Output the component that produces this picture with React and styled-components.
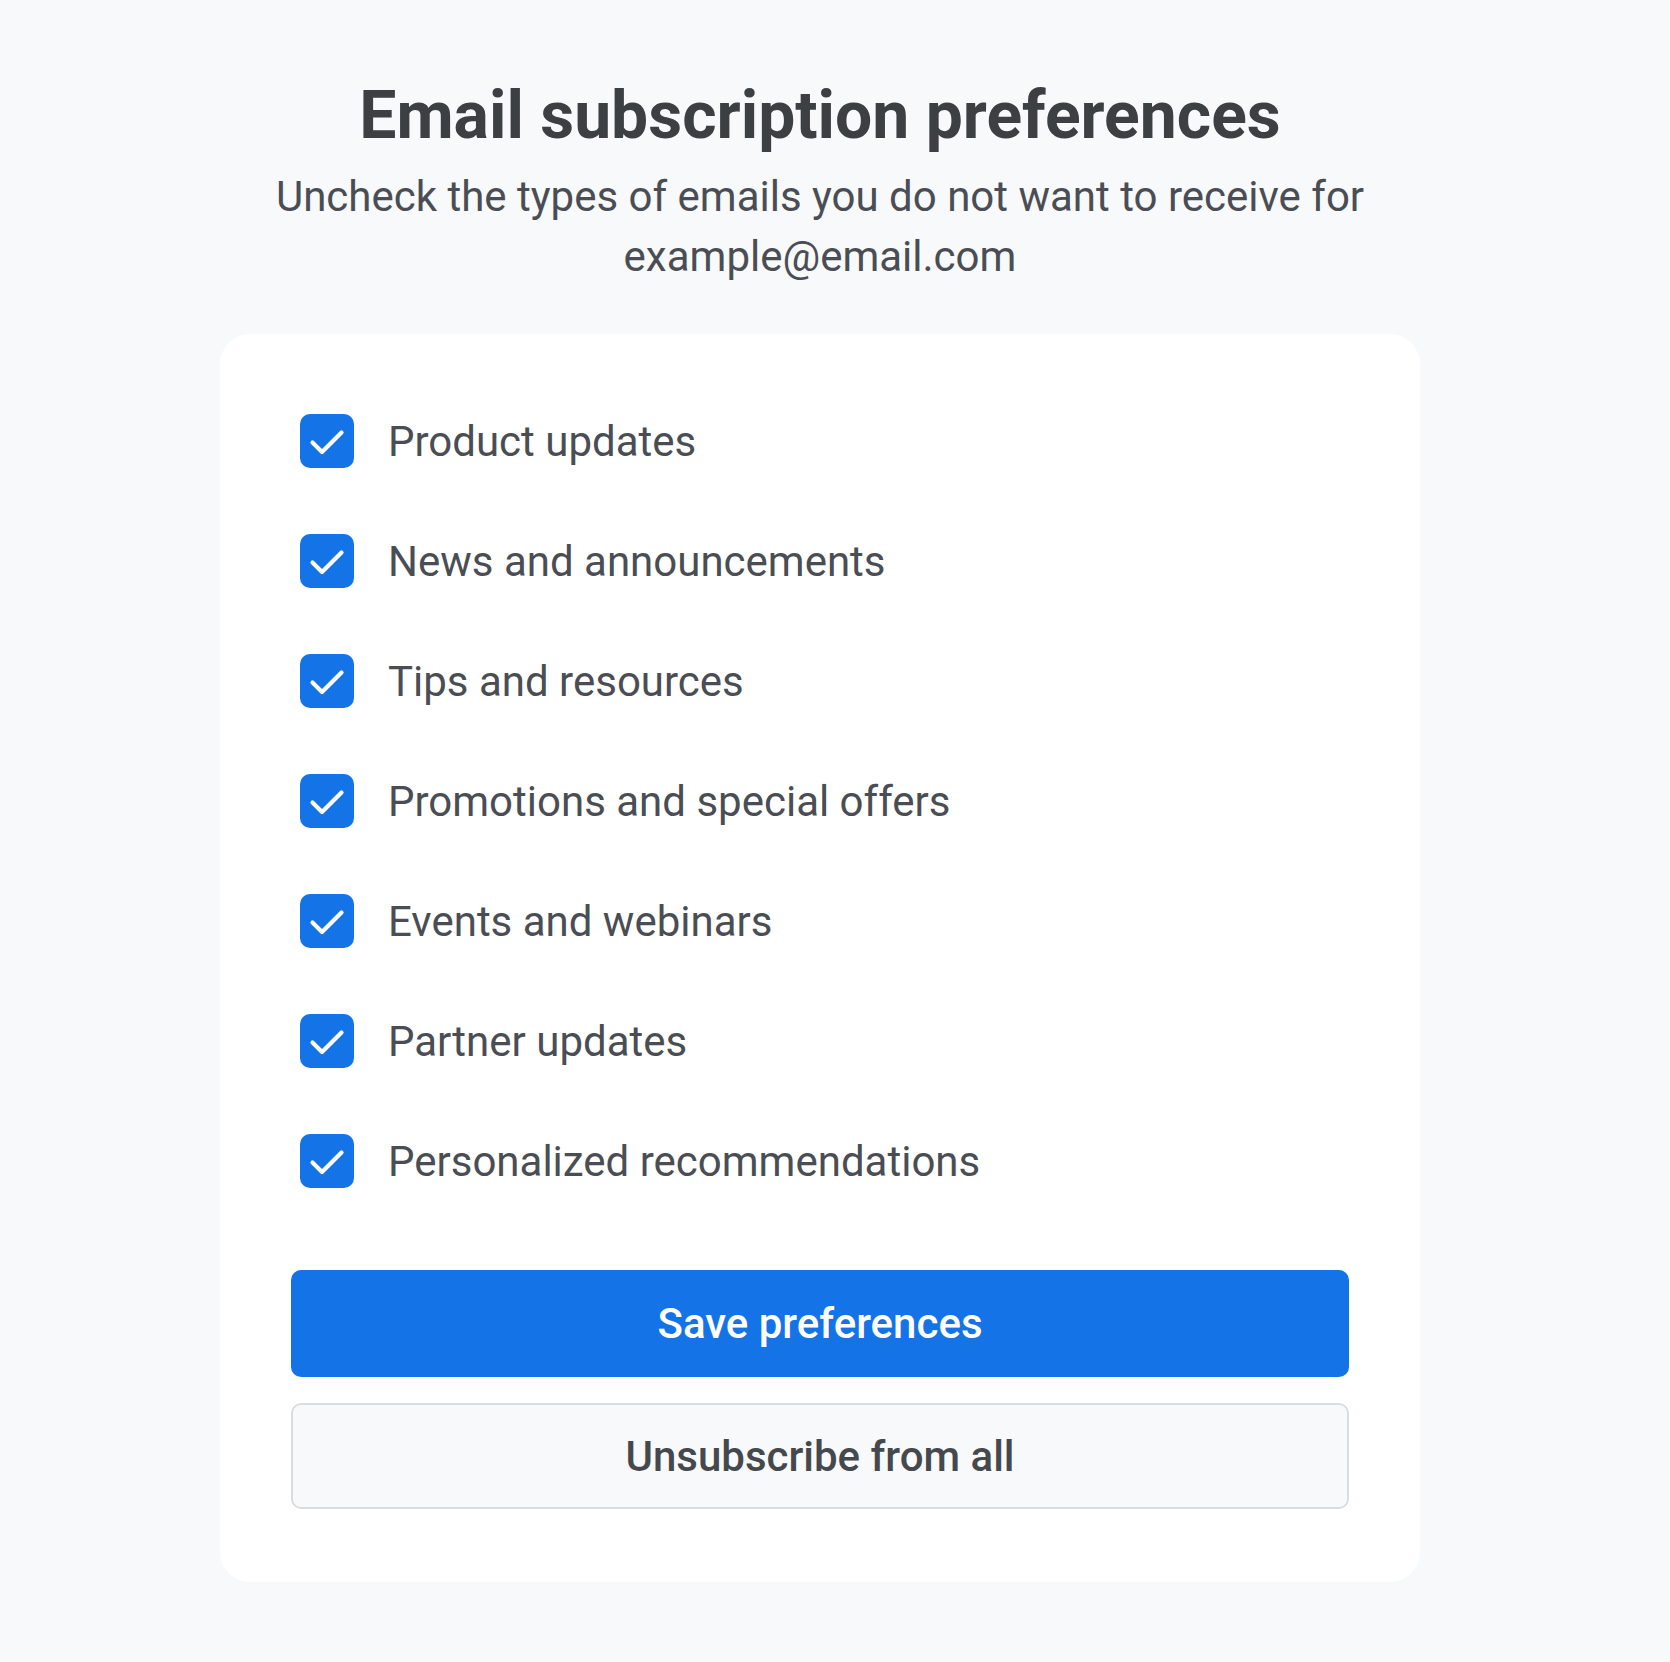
import React, { useState } from "react";
import styled, { createGlobalStyle } from "styled-components";

const GlobalStyle = createGlobalStyle`
  html, body {
    margin: 0;
    padding: 0;
    background: #f8f9fa;
    font-family: Roboto, "Liberation Sans", Arial, sans-serif;
    -webkit-font-smoothing: antialiased;
  }
`;

const Page = styled.main`
  min-height: 100vh;
  box-sizing: border-box;
  display: flex;
  flex-direction: column;
  align-items: center;
  padding: 76px 30px 80px 0;
`;

const Title = styled.h1`
  margin: 0;
  font-size: 66px;
  line-height: 1.2;
  font-weight: 700;
  color: #3c4043;
  text-align: center;
`;

const Subtitle = styled.p`
  margin: 12px 0 0;
  max-width: 1120px;
  font-size: 42px;
  line-height: 60px;
  color: #4a4e54;
  text-align: center;
`;

const Card = styled.section`
  width: 1200px;
  box-sizing: border-box;
  margin-top: 47px;
  padding: 80px 71px 73px;
  background: #ffffff;
  border-radius: 30px;
`;

const List = styled.div`
  display: flex;
  flex-direction: column;
  gap: 66px;
  padding: 0 9px;
`;

const Row = styled.label`
  display: flex;
  align-items: center;
  gap: 34px;
  height: 54px;
  cursor: pointer;
`;

const Box = styled.span`
  flex: none;
  width: 54px;
  height: 54px;
  border-radius: 10px;
  box-sizing: border-box;
  display: flex;
  align-items: center;
  justify-content: center;
  background: ${({ checked }) => (checked ? "#1473e6" : "#fff")};
  border: ${({ checked }) => (checked ? "none" : "3px solid #80868b")};
`;

const HiddenInput = styled.input`
  position: absolute;
  opacity: 0;
  width: 0;
  height: 0;
`;

const Label = styled.span`
  font-size: 42px;
  color: #4a4e54;
`;

const Actions = styled.div`
  display: flex;
  flex-direction: column;
  gap: 26px;
  margin-top: 82px;
`;

const Button = styled.button`
  width: 100%;
  height: ${({ primary }) => (primary ? "107px" : "106px")};
  border-radius: 10px;
  font-family: Roboto, "Liberation Sans", Arial, sans-serif;
  font-size: 42px;
  font-weight: 500;
  cursor: pointer;
  background: ${({ primary }) => (primary ? "#1473e6" : "#f8f9fa")};
  color: ${({ primary }) => (primary ? "#ffffff" : "#45494e")};
  border: ${({ primary }) => (primary ? "none" : "2px solid #dadce0")};
`;

const options = [
  "Product updates",
  "News and announcements",
  "Tips and resources",
  "Promotions and special offers",
  "Events and webinars",
  "Partner updates",
  "Personalized recommendations",
];

function Check() {
  return (
    <svg width="54" height="54" viewBox="0 0 54 54" fill="none">
      <path d="M12.5 28.5 L22 38 L41.5 18.5" stroke="#fff" strokeWidth="4.2" strokeLinecap="round" strokeLinejoin="round" />
    </svg>
  );
}

export default function App() {
  const [checked, setChecked] = useState(options.map(() => true));

  const toggle = (i) => {
    setChecked((prev) => prev.map((c, j) => (j === i ? !c : c)));
  };

  return (
    <>
      <GlobalStyle />
      <Page>
        <Title>Email subscription preferences</Title>
        <Subtitle>
          Uncheck the types of emails you do not want to receive for example@email.com
        </Subtitle>
        <Card>
          <List>
            {options.map((opt, i) => (
              <Row key={opt}>
                <HiddenInput type="checkbox" checked={checked[i]} onChange={() => toggle(i)} />
                <Box checked={checked[i]}>{checked[i] && <Check />}</Box>
                <Label>{opt}</Label>
              </Row>
            ))}
          </List>
          <Actions>
            <Button primary>Save preferences</Button>
            <Button onClick={() => setChecked(options.map(() => false))}>Unsubscribe from all</Button>
          </Actions>
        </Card>
      </Page>
    </>
  );
}
